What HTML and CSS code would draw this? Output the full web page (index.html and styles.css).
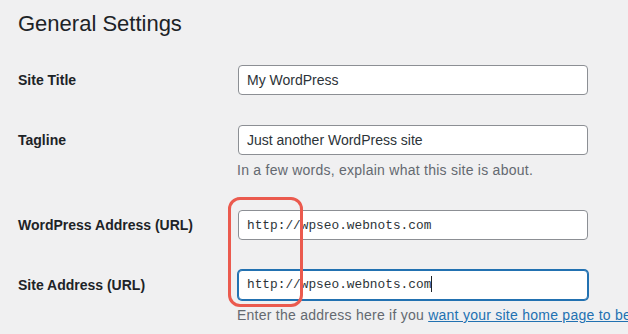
FILE: index.html
```html
<!DOCTYPE html>
<html lang="en">
<head>
    <meta charset="UTF-8">
    <meta name="viewport" content="width=device-width, initial-scale=1.0">
    <title>General Settings</title>
    <link rel="stylesheet" href="styles.css">
</head>
<body>

    <div class="wrap">
        <h1>General Settings</h1>

        <form class="settings-form">
            <div class="form-row">
                <label for="blogname">Site Title</label>
                <div class="field">
                    <input type="text" id="blogname" class="regular-text" value="My WordPress">
                </div>
            </div>

            <div class="form-row">
                <label for="blogdescription">Tagline</label>
                <div class="field">
                    <input type="text" id="blogdescription" class="regular-text" value="Just another WordPress site">
                    <p class="description">In a few words, explain what this site is about.</p>
                </div>
            </div>

            <div class="form-row">
                <label for="siteurl">WordPress Address (URL)</label>
                <div class="field">
                    <input type="text" id="siteurl" class="regular-text code" value="http://wpseo.webnots.com">
                    <!-- annotation box drawn over both url fields -->
                    <div class="highlight"></div>
                </div>
            </div>

            <div class="form-row">
                <label for="home">Site Address (URL)</label>
                <div class="field">
                    <div id="home" class="regular-text code is-focused">http://wpseo.webnots.com<span class="caret"></span></div>
                    <p class="description">Enter the address here if you <a href="#">want your site home page to be</a></p>
                </div>
            </div>
        </form>
    </div>

</body>
</html>
```

FILE: styles.css
```css
* {
    margin: 0;
    padding: 0;
    box-sizing: border-box;
}

body {
    font-family: 'Liberation Sans', Arial, sans-serif;
    font-size: 14px;
    background-color: #f0f0f1;
    color: #1d2327;
    overflow: hidden;
}

.wrap {
    padding-left: 18px;
}

h1 {
    font-size: 22px;
    font-weight: 400;
    line-height: 28px;
    margin-top: 10px;
    color: #1d2327;
}

.settings-form {
    display: flex;
    flex-direction: column;
    gap: 30px;
    margin-top: 27px;
}

.form-row {
    display: grid;
    grid-template-columns: 220px 1fr;
    align-items: start;
}

.form-row label {
    font-weight: bold;
    line-height: 30px;
    color: #1d2327;
}

.field {
    position: relative;
}

.regular-text {
    display: block;
    width: 350px;
    height: 30px;
    padding: 0 8px;
    border: 1px solid #8c8f94;
    border-radius: 4px;
    background-color: #ffffff;
    color: #2c3338;
    font-family: 'Liberation Sans', Arial, sans-serif;
    font-size: 14px;
    line-height: 28px;
}

.regular-text.code {
    font-family: 'Liberation Mono', monospace;
    font-size: 12.8px;
}

.is-focused {
    border-color: #2271b1;
    box-shadow: 0 0 0 1px #2271b1;
    white-space: nowrap;
}

.caret {
    display: inline-block;
    width: 1px;
    height: 16px;
    background-color: #1d2327;
    vertical-align: -4px;
}

.description {
    margin-top: 5px;
    margin-left: -1px;
    line-height: 20px;
    letter-spacing: 0.25px;
    color: #646970;
    white-space: nowrap;
}

.description a {
    color: #2271b1;
}

.highlight {
    position: absolute;
    left: -10px;
    top: -13px;
    width: 75px;
    height: 110px;
    border: 3px solid #eb5a4e;
    border-radius: 12px;
    z-index: 2;
}
```
